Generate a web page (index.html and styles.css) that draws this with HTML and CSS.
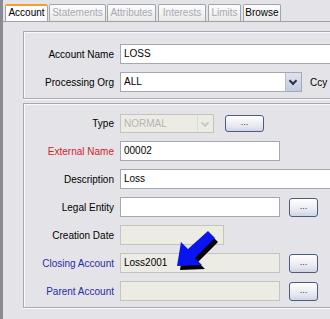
FILE: index.html
```html
<!DOCTYPE html>
<html>
<head>
<meta charset="UTF-8">
<title>Account</title>
<link rel="stylesheet" href="styles.css">
</head>
<body>
	<div class="window">
		<div class="tabs">
			<div class="tab active">Account</div>
			<div class="tab off w57">Statements</div>
			<div class="tab off w48">Attributes</div>
			<div class="tab off w47">Interests</div>
			<div class="tab off w32">Limits</div>
			<div class="tab w38">Browse</div>
		</div>
		<div class="page">
			<div class="panel first">
				<div class="row">
					<span class="label">Account Name</span>
					<span class="box grow">LOSS</span>
				</div>
				<div class="row">
					<span class="label">Processing Org</span>
					<span class="box select w182">ALL<span class="drop"></span></span>
					<span class="after">Ccy</span>
				</div>
			</div>
			<div class="panel second">
				<div class="row">
					<span class="label">Type</span>
					<span class="box select off w94">NORMAL<span class="drop dim"></span></span>
					<span class="btn wide">...</span>
				</div>
				<div class="row">
					<span class="label red">External Name</span>
					<span class="box w160">00002</span>
				</div>
				<div class="row">
					<span class="label">Description</span>
					<span class="box grow">Loss</span>
				</div>
				<div class="row">
					<span class="label">Legal Entity</span>
					<span class="box w160"></span>
					<span class="btn">...</span>
				</div>
				<div class="row">
					<span class="label">Creation Date</span>
					<span class="box off w104"></span>
				</div>
				<div class="row">
					<span class="label blue">Closing Account</span>
					<span class="box off w160">Loss2001</span>
					<span class="btn">...</span>
				</div>
				<div class="row">
					<span class="label blue">Parent Account</span>
					<span class="box off w160"></span>
					<span class="btn">...</span>
				</div>
			</div>
		</div>
		<svg class="arrow" width="50" height="46" viewBox="0 0 50 46">
			<polygon fill="#000" points="4,42 8,18 15,25 35,7 42,14 22,34 29,41"/>
			<polygon fill="#0a14f0" points="1,38 5,14 12,21 32,3 39,10 19,30 26,37"/>
		</svg>
	</div>
</body>
</html>
```
FILE: styles.css
```css
body {
	margin: 0px;
	overflow: hidden;
	background: #e4e4e8;
	font-family: "Liberation Sans", Arial, sans-serif;
	font-size: 10px;
	color: #000;
}

.window {
	position: relative;
	width: 330px;
	height: 319px;
	border-left: 3px solid #8a8a90;
	box-sizing: border-box;
	overflow: hidden;
}

.tabs {
	display: flex;
	gap: 1px;
	padding: 4px 0px 0px 2px;
	height: 17px;
	border-bottom: 1px solid #9ca0a8;
}

.tab {
	width: 43px;
	height: 17px;
	box-sizing: border-box;
	border: 1px solid #a0a4ac;
	border-bottom: none;
	border-radius: 2px 2px 0px 0px;
	background: linear-gradient(#fdfdfd, #e8e8e6);
	text-align: center;
	line-height: 15px;
}

.tab.active {
	background: #fcfcfe;
	border-top: 2px solid #f0a030;
	line-height: 14px;
}

.tab.off {
	color: #a8a8b4;
}

.w57 { width: 57px; }
.w48 { width: 49px; margin-right: 1px; }
.w47 { width: 48px; margin-right: 1px; }
.w32 { width: 33px; margin-right: 1px; }
.w38 { width: 38px; }

.page {
	padding: 9px 0px 0px 20px;
	display: flex;
	flex-direction: column;
	gap: 4px;
}

.panel {
	border-top: 1px solid #a8a8b0;
	border-left: 1px solid #a8a8b0;
	border-bottom: 1px solid #a8a8b0;
	box-shadow: inset 1px 1px 0px #fafafc, 0px 1px 0px #fafafc;
	display: flex;
	flex-direction: column;
	gap: 8px;
}

.panel.first {
	padding: 12px 0px 6px 0px;
}

.panel.second {
	padding: 9px 0px 6px 0px;
}

.row {
	display: flex;
	align-items: center;
	height: 20px;
}

.label {
	flex: none;
	width: 90px;
	margin-right: 6px;
	text-align: right;
	white-space: nowrap;
}

.red { color: #d8202c; }
.blue { color: #2a2aa8; }

.box {
	position: relative;
	height: 20px;
	box-sizing: border-box;
	border: 1px solid #a4a8b0;
	background: #ffffff;
	padding-left: 3px;
	line-height: 18px;
	white-space: nowrap;
	flex: none;
}

.box.off {
	background: #edece4;
	border-color: #c4c4bc;
}

.box.grow { width: 240px; }
.w182 { width: 182px; }
.w160 { width: 160px; }
.w104 { width: 104px; }
.w94 { width: 94px; height: 19px; line-height: 17px; }

.select.off {
	color: #b4b4b4;
}

.drop {
	position: absolute;
	right: 0px;
	top: 0px;
	width: 15px;
	height: 18px;
	background: linear-gradient(#dfe4f0, #c4cbe0);
	border-left: 1px solid #b8bed0;
}

.drop::after {
	content: "";
	position: absolute;
	left: 4px;
	top: 5px;
	width: 4px;
	height: 4px;
	border-right: 2px solid #2c3440;
	border-bottom: 2px solid #2c3440;
	transform: rotate(45deg);
}

.drop.dim {
	height: 17px;
	background: #ecece6;
	border-left: 1px solid #dcdcd4;
}

.drop.dim::after {
	border-color: #c8ccc0;
}

.after {
	flex: none;
	margin-left: 8px;
}

.btn {
	width: 29px;
	height: 19px;
	margin-left: 9px;
	box-sizing: border-box;
	border: 1px solid #4c5c7c;
	border-radius: 3px;
	background: linear-gradient(#ffffff, #e6e6f0 70%, #cfd3e4);
	text-align: center;
	line-height: 14px;
	font-size: 9px;
	color: #30306a;
	flex: none;
}

.btn.wide {
	width: 39px;
	height: 17px;
	margin-left: 11px;
	line-height: 12px;
}

.arrow {
	position: absolute;
	left: 173px;
	top: 228px;
}
```
